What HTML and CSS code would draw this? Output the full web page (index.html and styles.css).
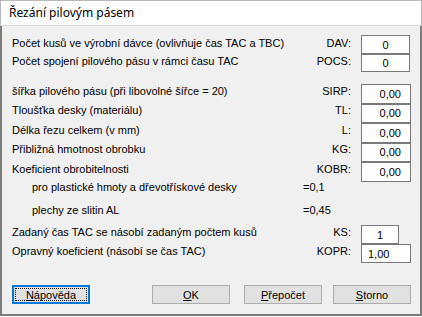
FILE: index.html
```html
<!DOCTYPE html>
<html lang="cs">
<head>
<meta charset="utf-8">
<title>Řezání pilovým pásem</title>
<link rel="stylesheet" href="styles.css">
</head>
<body>
<div class="window">
  <div class="titlebar">Řezání pilovým pásem</div>
  <div class="client">
    <div class="form">
      <div class="row r19 up2">
        <span class="desc">Počet kusů ve výrobní dávce (ovlivňuje čas TAC a TBC)</span>
        <span class="lbl">DAV:</span>
        <span class="field center w49">0</span>
      </div>
      <div class="row r18 up2">
        <span class="desc">Počet spojení pilového pásu v rámci času TAC</span>
        <span class="lbl">POCS:</span>
        <span class="field center w49">0</span>
      </div>
      <div class="row rbox gap-top">
        <span class="desc">šířka pilového pásu (při libovolné šířce = 20)</span>
        <span class="lbl">SIRP:</span>
        <span class="field num">0,00</span>
      </div>
      <div class="row rbox">
        <span class="desc">Tloušťka desky (materiálu)</span>
        <span class="lbl">TL:</span>
        <span class="field num">0,00</span>
      </div>
      <div class="row rbox">
        <span class="desc">Délka řezu celkem (v mm)</span>
        <span class="lbl">L:</span>
        <span class="field num">0,00</span>
      </div>
      <div class="row rbox">
        <span class="desc">Přibližná hmotnost obrobku</span>
        <span class="lbl">KG:</span>
        <span class="field num">0,00</span>
      </div>
      <div class="row rbox">
        <span class="desc">Koeficient obrobitelnosti</span>
        <span class="lbl">KOBR:</span>
        <span class="field num">0,00</span>
      </div>
      <div class="row r17">
        <span class="desc indent">pro plastické hmoty a dřevotřískové desky</span>
        <span class="val">=0,1</span>
      </div>
      <div class="row r20 gap-mid">
        <span class="desc indent">plechy ze slitin AL</span>
        <span class="val">=0,45</span>
      </div>
      <div class="row r19 gap-small">
        <span class="desc">Zadaný čas TAC se násobí zadaným počtem kusů</span>
        <span class="lbl">KS:</span>
        <span class="field center w38">1</span>
      </div>
      <div class="row r19">
        <span class="desc">Opravný koeficient (násobí se čas TAC)</span>
        <span class="lbl">KOPR:</span>
        <span class="field left">1,00</span>
      </div>
    </div>
    <div class="buttons">
      <button class="btn default"><span class="focus"><u>N</u>ápověda</span></button>
      <button class="btn ok"><u>O</u>K</button>
      <button class="btn recalc"><u>P</u>řepočet</button>
      <button class="btn cancel"><u>S</u>torno</button>
    </div>
  </div>
</div>
</body>
</html>
```
FILE: styles.css
```css
* { box-sizing: border-box; }

body {
  margin: 0;
  font-family: "Liberation Sans", Arial, sans-serif;
  font-size: 11px;
  color: #000;
  background: #fff;
}

.window {
  width: 422px;
  height: 317px;
  display: flex;
  flex-direction: column;
  background: #fff;
}

.titlebar {
  height: 26px;
  background: #fff;
  border: 1px solid #b9b9b9;
  border-bottom: 1px solid #d9d9d9;
  padding-left: 8px;
  font-family: "Noto Sans", "Segoe UI", sans-serif;
  font-size: 12px;
  line-height: 24px;
}

.client {
  flex: 1;
  background: #f0f0f0;
  border-left: 2px solid #7c7c7c;
  border-right: 2px solid #7c7c7c;
  border-bottom: 2px solid #7c7c7c;
  margin-bottom: 1px;
  display: flex;
  flex-direction: column;
}

.form {
  padding: 9px 0 0 10px;
  display: flex;
  flex-direction: column;
}

.row {
  display: flex;
  align-items: center;
}

.r17 { height: 17px; }
.r18 { height: 18px; }
.r19 { height: 19px; }
.r20 { height: 20px; }
.rbox { height: 19.5px; }
.gap-top { margin-top: 12px; }
.gap-mid { margin-top: 4.5px; }
.gap-small { margin-top: 2px; }

.desc {
  width: 288px;
  white-space: nowrap;
  padding-bottom: 6px;
}

.indent { padding-left: 20px; }

.lbl {
  width: 51px;
  text-align: right;
  padding-bottom: 6px;
}

.val {
  padding-left: 3px;
  padding-bottom: 6px;
}

.up2 .desc,
.up2 .lbl { padding-bottom: 4px; }

.field {
  margin-left: 10px;
  width: 50px;
  height: 100%;
  background: #fff;
  border: 1px solid #7a7a7a;
  display: flex;
  align-items: center;
}

.w49 { width: 49px; }
.w38 { width: 38px; }

.center { justify-content: center; }
.num { justify-content: flex-end; padding-right: 9px; }
.left { padding-left: 6px; }

.buttons {
  margin-top: auto;
  margin-bottom: 10px;
  padding-left: 10px;
  display: flex;
}

.btn {
  width: 78px;
  height: 19px;
  padding: 0;
  background: #e1e1e1;
  border: 1px solid #adadad;
  font-family: "Liberation Sans", Arial, sans-serif;
  font-size: 11px;
  color: #000;
  display: flex;
  align-items: center;
  justify-content: center;
}

.btn.default {
  border: 2px solid #0078d7;
  padding: 1px;
}

.focus {
  flex: 1;
  align-self: stretch;
  display: flex;
  align-items: center;
  justify-content: center;
  border: 1px dotted #000;
}

.btn.ok { margin-left: 62px; }
.btn.recalc { margin-left: 14px; }
.btn.cancel { margin-left: 11px; }
```
